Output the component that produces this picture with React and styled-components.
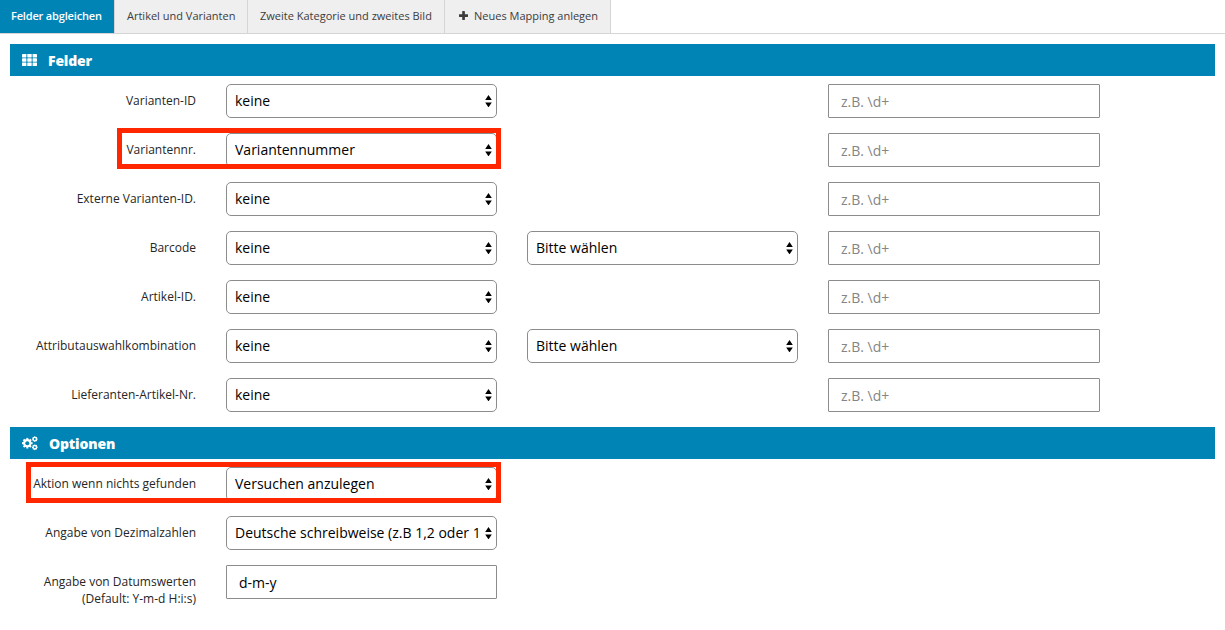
import React from "react";
import styled, { createGlobalStyle, css } from "styled-components";

const GlobalStyle = createGlobalStyle`
  *, *::before, *::after { box-sizing: border-box; }
  body {
    margin: 0;
    background: #fff;
    color: #262626;
    font-family: "Open Sans", "Noto Sans", sans-serif;
    font-size: 12px;
  }
`;

const Page = styled.div`
  width: 1225px;
  height: 630px;
  overflow: hidden;
`;

const TabBar = styled.nav`
  display: flex;
  height: 34px;
  border-bottom: 1px solid #d5d5d5;
`;

const Tab = styled.div`
  display: flex;
  align-items: center;
  gap: 6px;
  width: ${(p) => p.$width}px;
  height: 33px;
  padding: 0 0 2px ${(p) => (p.$active ? 11 : 12)}px;
  background: #efefef;
  border-right: 1px solid #d5d5d5;
  color: #3c3c3c;
  font-size: 11px;
  letter-spacing: ${(p) => p.$spacing || 0}px;
  white-space: nowrap;

  svg { margin-left: 2px; }

  ${(p) => p.$active && css`
    background: #0084b6;
    color: #fff;
    font-weight: 600;
  `}
`;

const Panel = styled.section`
  margin: ${(p) => p.$top}px 10px 0;
`;

const PanelHeader = styled.header`
  display: flex;
  align-items: center;
  gap: ${(p) => p.$gap}px;
  height: 32px;
  padding: 1px 0 0 12px;
  background: #0084b6;
  color: #fff;
  font-size: 14px;
  font-weight: 800;
  letter-spacing: -0.17px;
`;

const HeaderIcon = styled.span`
  display: flex;
  padding-bottom: 2px;
`;

const Rows = styled.div`
  display: grid;
  gap: 15px;
  padding-top: 8px;
`;

const Row = styled.div`
  position: relative;
  display: grid;
  grid-template-columns: 186px 271px 271px 272px;
  column-gap: 30px;
  height: 34px;
`;

const Label = styled.label`
  padding-top: 8px;
  line-height: 17px;
  text-align: right;
  white-space: nowrap;
`;

const SelectBox = styled.div`
  display: flex;
  align-items: center;
  justify-content: space-between;
  height: 34px;
  padding: 0 4px 1px 8px;
  border: 1px solid #8c8c8c;
  border-radius: 5px;
  color: #000;
  font-size: 14px;
  white-space: nowrap;

  svg { margin-top: 1px; }
`;

const TextInput = styled.input`
  grid-column: ${(p) => p.$column};
  width: 100%;
  height: 34px;
  padding: 0 12px;
  border: 1px solid #8c8c8c;
  border-radius: 1px;
  background: #fff;
  color: #000;
  font: 14px "Open Sans", "Noto Sans", sans-serif;
  &::placeholder { color: #858585; opacity: 1; }
`;

const Highlight = styled.div`
  position: absolute;
  top: -5px;
  left: ${(p) => p.$left}px;
  width: ${(p) => 491 - p.$left}px;
  height: 41px;
  border: 5px solid #ff2600;
  pointer-events: none;
`;

const GridIcon = () => (
  <svg width="15" height="12" viewBox="0 0 15 12" fill="currentColor">
    {[0, 4.3, 8.6].map((y) =>
      [0, 5.3, 10.6].map((x) => (
        <rect key={`${x}-${y}`} x={x} y={y} width="4.4" height="3.4" rx=".4" />
      ))
    )}
  </svg>
);

const Gear = ({ x, y, r, tooth, hole }) => (
  <g transform={`translate(${x} ${y})`}>
    {[0, 45, 90, 135].map((a) => (
      <rect
        key={a}
        x={-r}
        y={-tooth / 2}
        width={2 * r}
        height={tooth}
        transform={`rotate(${a})`}
      />
    ))}
    <circle r={r * 0.78} />
    <circle r={hole} fill="#0084b6" />
  </g>
);

const CogsIcon = () => (
  <svg width="16" height="16" viewBox="0 0 16 16" fill="currentColor">
    <Gear x={5.3} y={8.2} r={5.3} tooth={2} hole={2} />
    <Gear x={12.8} y={4.1} r={2.8} tooth={1.3} hole={1.05} />
    <Gear x={12.8} y={12.3} r={2.8} tooth={1.3} hole={1.05} />
  </svg>
);

const PlusIcon = () => (
  <svg width="9" height="9" viewBox="0 0 9 9" fill="currentColor">
    <rect x="3.2" y="0" width="2.7" height="9" rx=".4" />
    <rect x="0" y="3.2" width="9" height="2.7" rx=".4" />
  </svg>
);

const Arrows = () => (
  <svg width="7" height="12" viewBox="0 0 7 12">
    <path d="M3.5 0 6.8 5H.2ZM.2 7.4H6.8L3.5 12.4Z" fill="#000" />
  </svg>
);

const Select = ({ children }) => (
  <SelectBox>
    <span>{children}</span>
    <Arrows />
  </SelectBox>
);

const fields = [
  { label: "Varianten-ID", value: "keine" },
  { label: "Variantennr.", value: "Variantennummer", mark: 107 },
  { label: "Externe Varianten-ID.", value: "keine" },
  { label: "Barcode", value: "keine", extra: "Bitte wählen" },
  { label: "Artikel-ID.", value: "keine" },
  { label: "Attributauswahlkombination", value: "keine", extra: "Bitte wählen" },
  { label: "Lieferanten-Artikel-Nr.", value: "keine" },
];

export default function App() {
  return (
    <Page>
      <GlobalStyle />
      <TabBar>
        <Tab $active $width={115} $spacing={-0.17}>Felder abgleichen</Tab>
        <Tab $width={133}>Artikel und Varianten</Tab>
        <Tab $width={197}>Zweite Kategorie und zweites Bild</Tab>
        <Tab $width={166}><PlusIcon />Neues Mapping anlegen</Tab>
      </TabBar>

      <Panel $top={10}>
        <PanelHeader $gap={11}>
          <HeaderIcon><GridIcon /></HeaderIcon>
          Felder
        </PanelHeader>
        <Rows>
          {fields.map((f) => (
            <Row key={f.label}>
              <Label>{f.label}</Label>
              <Select>{f.value}</Select>
              {f.extra && <Select>{f.extra}</Select>}
              <TextInput $column={4} placeholder="z.B. \d+" />
              {f.mark && <Highlight $left={f.mark} />}
            </Row>
          ))}
        </Rows>
      </Panel>

      <Panel $top={15}>
        <PanelHeader $gap={11}>
          <HeaderIcon><CogsIcon /></HeaderIcon>
          Optionen
        </PanelHeader>
        <Rows>
          <Row>
            <Label>Aktion wenn nichts gefunden</Label>
            <Select>Versuchen anzulegen</Select>
            <Highlight $left={16} />
          </Row>
          <Row>
            <Label>Angabe von Dezimalzahlen</Label>
            <Select>Deutsche schreibweise (z.B 1,2 oder 1</Select>
          </Row>
          <Row>
            <Label>Angabe von Datumswerten<br />(Default: Y-m-d H:i:s)</Label>
            <TextInput $column={2} defaultValue="d-m-y" />
          </Row>
        </Rows>
      </Panel>
    </Page>
  );
}
